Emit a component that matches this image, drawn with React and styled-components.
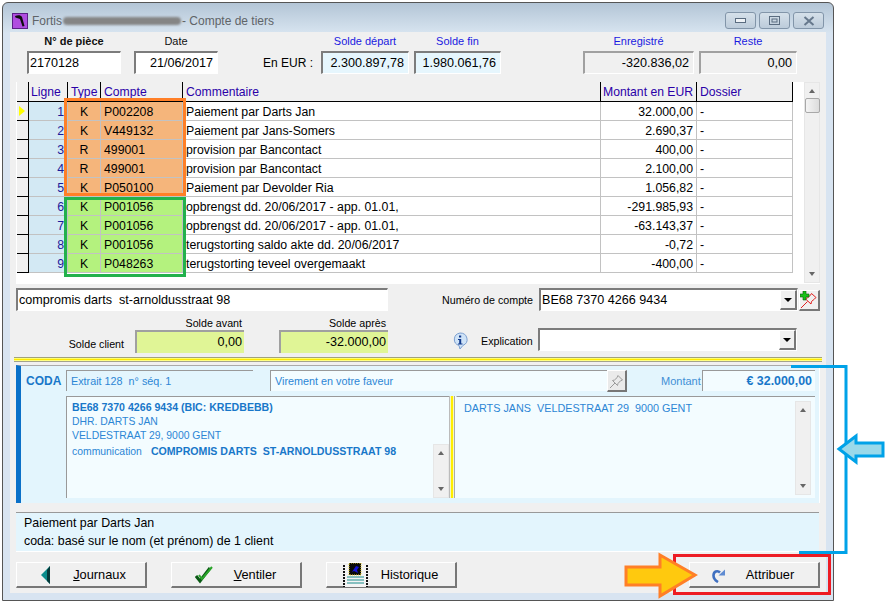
import React from "react";
import styled, { createGlobalStyle } from "styled-components";

const GlobalStyle = createGlobalStyle`
  html, body { margin: 0; padding: 0; background: #fff; }
  body { font-family: "Liberation Sans", Arial, sans-serif; color: #000; }
  * { box-sizing: border-box; }
`;

const Page = styled.div`
  position: relative;
  width: 886px;
  height: 603px;
  padding: 2px 0 0 2px;
  overflow: hidden;
`;

const Window = styled.div`
  width: 832px;
  height: 599px;
  border: 1px solid #555;
  border-radius: 6px 6px 0 0;
  background: linear-gradient(#b3c5d6 0, #d6e3ef 29px, #d8e4f1 30px);
  padding: 0 7px 7px;
  display: flex;
  flex-direction: column;
`;

const TitleBar = styled.div`
  height: 29px;
  flex: none;
  display: flex;
  align-items: center;
  font-size: 12px;
  color: #5f6468;
  padding: 6px 2px 0 2px;
`;

const TitleText = styled.span`
  margin-left: 4px;
`;

const Blurred = styled.span`
  width: 118px;
  height: 8px;
  margin: 0 1px 0 1px;
  background: #858585;
  border-radius: 4px;
  filter: blur(0.8px);
`;

const WinButtons = styled.div`
  margin-left: auto;
  display: flex;
  gap: 3px;
`;

const WinButton = styled.div`
  width: 31px;
  height: 17px;
  border: 1px solid #8295a9;
  border-radius: 3px;
  background: linear-gradient(#d5e0ea, #c9d6e2 50%, #bccbda);
  display: flex;
  align-items: center;
  justify-content: center;
`;

const Content = styled.div`
  flex: 1;
  background: #f0f0f0;
  width: 816px;
  display: flex;
  flex-direction: column;
`;

const HeaderRow = styled.div`
  display: flex;
  align-items: flex-end;
  padding-left: 17px;
  height: 42px;
`;

const FieldCol = styled.div`
  width: ${(p) => p.$w}px;
  margin-left: ${(p) => p.$ml || 0}px;
  display: flex;
  flex-direction: column;
`;

const TopLabel = styled.div`
  height: 19px;
  padding-top: 3px;
  font-size: 11px;
  text-align: center;
  font-weight: ${(p) => (p.$bold ? 700 : 400)};
  color: ${(p) => (p.$blue ? "#1a1ae0" : "#111")};
`;

const Sunken = styled.div`
  height: 23px;
  border-style: solid;
  border-width: 2px 1px 1px 2px;
  border-color: ${(p) => (p.$soft ? "#a0a0a0" : "#7c7c7c")} #fff #fff ${(p) => (p.$soft ? "#a0a0a0" : "#7c7c7c")};
  background: ${(p) => p.$bg || "#fff"};
  font-size: 12.6px;
  line-height: 21px;
  padding: 0 ${(p) => (p.$right ? 4 : 1)}px 0 1px;
  text-align: ${(p) => (p.$right ? "right" : "left")};
  white-space: nowrap;
`;

const Caption = styled.div`
  font-size: 12px;
  width: ${(p) => p.$w}px;
  height: 23px;
  line-height: 24px;
  text-align: right;
  padding-right: 8px;
`;

const TableArea = styled.div`
  margin: 8px 0 0 6px;
  width: 804px;
  height: 202px;
  background: #fff;
  padding-left: 1px;
  display: flex;
  justify-content: space-between;
`;

const Grid = styled.div`
  width: 776px;
  display: flex;
  flex-direction: column;
`;

const columns = "12px 39px 33px 82px 418px 96px 96px";

const HeadRow = styled.div`
  display: grid;
  grid-template-columns: ${columns};
  height: 20px;
  background: #f0f0f0;
  border-bottom: 1px solid #000;
`;

const HeadCell = styled.div`
  font-size: 12.2px;
  line-height: 21px;
  color: #2a00a8;
  padding-left: ${(p) => p.$pl || 3}px;
  border-right: 1px solid #000;
  white-space: nowrap;
  overflow: hidden;
`;

const Row = styled.div`
  display: grid;
  grid-template-columns: ${columns};
  height: 19px;
`;

const Marker = styled.div`
  background: #f0f0f0;
  border-bottom: 1px solid #000;
  border-right: 1px solid #000;
  display: flex;
  align-items: center;
  padding-left: 2px;
`;

const Triangle = styled.span`
  width: 0;
  height: 0;
  border-left: 6px solid #ffff00;
  border-top: 5px solid transparent;
  border-bottom: 5px solid transparent;
`;

const tones = { orange: "#f5b57b", green: "#b4f27e", head: "#d3e9f4" };

const cellPadding = { right: "0 3px 0 0", center: "0" };

const Cell = styled.div`
  font-size: 12.3px;
  line-height: 20px;
  padding: ${(p) => cellPadding[p.$align] || "0 2px 0 3px"};
  text-align: ${(p) => p.$align || "left"};
  color: ${(p) => (p.$tone === "head" ? "#1a1a9a" : "#000")};
  background: ${(p) => tones[p.$tone] || "#fff"};
  border-right: 1px solid #c2c2c2;
  border-bottom: 1px solid #c2c2c2;
  white-space: nowrap;
  overflow: hidden;
`;

const ScrollBar = styled.div`
  width: ${(p) => p.$w || 16}px;
  height: ${(p) => p.$h}px;
  flex: none;
  background: #f0f0f0;
  border: 1px solid #e6e6e6;
  display: flex;
  flex-direction: column;
  align-items: center;
  justify-content: space-between;
  padding: 6px 0;
`;

const ScrollArrow = styled.span`
  width: 0;
  height: 0;
  border-left: 3.5px solid transparent;
  border-right: 3.5px solid transparent;
  ${(p) => (p.$down ? "border-top: 4px solid #666;" : "border-bottom: 4px solid #666;")}
`;

const ScrollThumb = styled.div`
  width: 15px;
  height: 15px;
  margin-top: 5px;
  margin-bottom: auto;
  border: 1px solid #a8a8a8;
  border-radius: 2px;
  background: linear-gradient(90deg, #f4f4f4, #dcdcdc);
`;

const EntryRow = styled.div`
  display: flex;
  align-items: flex-end;
  margin: 4px 0 0 6px;
  height: 23px;
`;

const SmallLabel = styled.div`
  font-size: 10.7px;
  width: ${(p) => p.$w}px;
  text-align: ${(p) => p.$align || "right"};
  padding-bottom: ${(p) => p.$pb || 0}px;
  white-space: nowrap;
`;

const Combo = styled(Sunken)`
  position: relative;
  width: ${(p) => p.$w}px;
  margin-left: ${(p) => p.$ml || 0}px;
  flex: none;
`;

const Drop = styled.div`
  position: absolute;
  right: 0;
  top: 0;
  width: 17px;
  height: 20px;
  background: #f0f0f0;
  border-style: solid;
  border-width: 1px 2px 2px 1px;
  border-color: #fff #777 #777 #fff;
  display: flex;
  align-items: center;
  justify-content: center;
`;

const DropArrow = styled.span`
  width: 0;
  height: 0;
  border-left: 4px solid transparent;
  border-right: 4px solid transparent;
  border-top: 4px solid #000;
`;

const IconButton = styled.div`
  width: ${(p) => p.$w}px;
  height: ${(p) => p.$h}px;
  flex: none;
  margin-left: ${(p) => p.$ml || 0}px;
  background: #f0f0f0;
  border-style: solid;
  border-width: 1px 2px 2px 1px;
  border-color: #fff #777 #777 #fff;
  display: flex;
  align-items: center;
  justify-content: center;
`;

const BalanceRow = styled.div`
  display: flex;
  align-items: flex-end;
  margin: 6px 0 0 6px;
  height: 36px;
`;

const BalanceCol = styled.div`
  width: 109px;
  margin-left: ${(p) => p.$ml || 0}px;
  display: flex;
  flex-direction: column;
`;

const BalanceLabel = styled.div`
  font-size: 10.7px;
  height: 13px;
  line-height: 13px;
  text-align: right;
  padding-right: 2px;
`;

const BalanceValue = styled(Sunken)`
  border-right: none;
  border-bottom: none;
  padding-right: 2px;
`;

const InfoSlot = styled.div`
  width: 16px;
  height: 18px;
  margin: 0 13px 3px 64px;
`;

const ExplCombo = styled(Combo)`
  margin-bottom: 2px;
`;

const DoubleLine = styled.div`
  margin: 4px 0 0 4px;
  width: 808px;
  height: 5px;
  flex: none;
  background: linear-gradient(#a3a37a 0 1px, #ffff70 1px 2px, #ffe800 2px 3px, #ffff80 3px 4px, #a3a38c 4px 5px);
`;

const CodaPanel = styled.div`
  margin: 3px 0 0 6px;
  width: 804px;
  height: 138px;
  flex: none;
  background: #e3f5fd;
  border-top: 1px solid #aaa;
  border-left: 5px solid #0a70c8;
  border-right: 1px solid #fff;
  display: flex;
  flex-direction: column;
  padding-top: 4px;
`;

const CodaTop = styled.div`
  display: flex;
  align-items: center;
  height: 21px;
`;

const CodaTitle = styled.div`
  width: 45px;
  padding-left: 5px;
  font-size: 12px;
  font-weight: 700;
  color: #1877c9;
`;

const CodaField = styled.div`
  position: relative;
  width: ${(p) => p.$w}px;
  margin-left: ${(p) => p.$ml || 0}px;
  height: 21px;
  padding: 0 ${(p) => (p.$right ? 3 : 4)}px;
  border-top: 1px solid #999;
  border-left: 1px solid #999;
  background: ${(p) => p.$bg || "#e3f5fd"};
  color: ${(p) => (p.$right ? "#1877c9" : "#2c86d5")};
  font-size: ${(p) => (p.$right ? 12.4 : 10.8)}px;
  font-weight: ${(p) => (p.$right ? 700 : 400)};
  line-height: 20px;
  text-align: ${(p) => (p.$right ? "right" : "left")};
`;

const PinButton = styled(IconButton)`
  position: absolute;
  right: 0;
  top: -1px;
  background: #eaeaea;
`;

const CodaLabel = styled.div`
  margin-left: 34px;
  width: 41px;
  font-size: 11px;
  color: #3f8fd6;
`;

const CodaBody = styled.div`
  display: flex;
  margin: 5px 0 0 45px;
  height: 102px;
`;

const CodaBox = styled.div`
  position: relative;
  flex: none;
  width: ${(p) => p.$w}px;
  background: #f3fcff;
  border-top: 1px solid #999;
  border-left: 1px solid ${(p) => (p.$plain ? "#999" : "transparent")};
  padding: ${(p) => (p.$plain ? "3px 0 0 5px" : "4px 0 0 7px")};
  font-size: ${(p) => (p.$plain ? 10.4 : 10.8)}px;
  line-height: 14.7px;
  color: #2c86d5;
`;

const CodaLine = styled.div`
  display: flex;
  align-items: baseline;
  gap: 9px;
  white-space: pre;
`;

const Strong = styled.b`
  color: #1877c9;
  font-size: 10.6px;
`;

const BoxScroll = styled.div`
  position: absolute;
  right: ${(p) => p.$r}px;
  top: ${(p) => p.$t}px;
`;

const Splitter = styled.div`
  width: 7px;
  flex: none;
  background: linear-gradient(90deg, #bbb 0 1px, #f7f7c0 1px 2px, #ffee00 2px 4px, #f7f7c0 4px 5px, #aaa 5px 6px, #f3fcff 6px);
`;

const StatusBox = styled.div`
  margin: 9px 0 0 6px;
  width: 803px;
  height: 40px;
  flex: none;
  background: #e3f5fd;
  border-top: 1px solid #999;
  border-bottom: 1px solid #fff;
  font-size: 12.4px;
  line-height: 18px;
  padding: 1px 0 0 8px;
`;

const ButtonBar = styled.div`
  display: flex;
  margin: 10px 0 0 6px;
  gap: 24px;
`;

const ActionButton = styled.div`
  position: relative;
  width: 131px;
  height: 26px;
  margin-left: ${(p) => p.$ml || 0}px;
  background: #f0f0f0;
  border-style: solid;
  border-width: 1px 2px 2px 1px;
  border-color: #fff #777 #777 #fff;
  font-size: 12.8px;
  line-height: 24px;
  text-align: center;
  padding-left: ${(p) => p.$pl || 0}px;
`;

const ButtonIcon = styled.span`
  position: absolute;
  left: ${(p) => p.$x}px;
  top: ${(p) => p.$y}px;
  display: block;
  line-height: 0;
`;

const Frame = styled.div`
  position: absolute;
  left: ${(p) => p.$x}px;
  top: ${(p) => p.$y}px;
  width: ${(p) => p.$w}px;
  height: ${(p) => p.$h}px;
  border: 3px solid ${(p) => p.$color};
  pointer-events: none;
`;

const Annotations = styled.svg`
  position: absolute;
  left: 0;
  top: 0;
  pointer-events: none;
`;

const rows = [
  ["1", "K", "P002208", "Paiement par Darts Jan", "32.000,00", "orange"],
  ["2", "K", "V449132", "Paiement par Jans-Somers", "2.690,37", "orange"],
  ["3", "R", "499001", "provision par Bancontact", "400,00", "orange"],
  ["4", "R", "499001", "provision par Bancontact", "2.100,00", "orange"],
  ["5", "K", "P050100", "Paiement par Devolder Ria", "1.056,82", "orange"],
  ["6", "K", "P001056", "opbrengst dd. 20/06/2017 - app. 01.01,", "-291.985,93", "green"],
  ["7", "K", "P001056", "opbrengst dd. 20/06/2017 - app. 01.01,", "-63.143,37", "green"],
  ["8", "K", "P001056", "terugstorting saldo akte dd. 20/06/2017", "-0,72", "green"],
  ["9", "K", "P048263", "terugstorting teveel overgemaakt", "-400,00", "green"],
];

const AppIcon = () => (
  <svg width="16" height="16" viewBox="0 0 16 16">
    <rect width="16" height="16" fill="#b04de0" />
    <rect x="0.5" y="0.5" width="15" height="15" fill="none" stroke="#5a1f86" />
    <path d="M3 3c3-1.500 6-1 7 1l2.500 9-2 .5L8 6 3.500 4.500z" fill="#0d0d0d" />
  </svg>
);

const PinIcon = ({ color, size = 16 }) => (
  <svg width={size} height={size} viewBox="0 0 16 16" fill="none" stroke={color} strokeWidth="1">
    <path d="M1 15l5-5" />
    <path d="M9 2.500l4.500 4.500-2 .8-2.500 2.700-.5 2-5-5 2-.5L8.200 4.500z" />
  </svg>
);

const AddPinIcon = () => (
  <svg width="18" height="18" viewBox="0 0 18 18" fill="none">
    <path d="M1 17l6.500-6.500" stroke="#e02020" />
    <path d="M11.500 2.500l4.500 4-1.500 1.500-3 2.500-.5 2.500-6-5.500 2.500-.5 3-3z" stroke="#e02020" />
    <path d="M3 0h3v3h3v3H6v3H3V6H0V3h3z" fill="#18c018" stroke="#0a5a0a" strokeWidth="0.600" />
  </svg>
);

const InfoIcon = () => (
  <svg width="16" height="18" viewBox="0 0 16 18">
    <path d="M8 1a7 6.500 0 0 1 3 12.400L8 17l-1-3.500A7 6.500 0 0 1 8 1z" fill="#cfe3f7" stroke="#7c9fd0" />
    <rect x="7" y="3.500" width="2.200" height="2" fill="#123a8c" />
    <path d="M6 7h3.200v4.500H10.500v1H6v-1h1.200V8H6z" fill="#123a8c" />
  </svg>
);

const BackIcon = () => (
  <svg width="10" height="18" viewBox="0 0 10 18">
    <path d="M9 0v18L0 9z" fill="#0a8c8c" />
    <path d="M9 0v18L6 15V4z" fill="#063a3a" />
  </svg>
);

const CheckIcon = () => (
  <svg width="18" height="18" viewBox="0 0 18 18" fill="none">
    <path d="M1 10l4 5L15 2" stroke="#0a5a14" strokeWidth="3" />
    <path d="M4 9l3 4L17 1" stroke="#2aa52a" strokeWidth="2" />
  </svg>
);

const BookIcon = () => (
  <svg width="25" height="24" viewBox="0 0 25 24">
    <rect x="1" y="2" width="23" height="22" fill="#f4f4f4" />
    <path d="M1 2v22M24 2v22" stroke="#111" strokeWidth="2" strokeDasharray="2 1" />
    <path d="M4 14h17M4 17h17M4 20h17" stroke="#1a8c8c" strokeWidth="1.200" />
    <rect x="6" y="0" width="12" height="12" fill="#0a0a0a" stroke="#e8d22c" strokeDasharray="1 1" />
    <path d="M9 9l4-6 3 1-2 3 1 3-4-2z" fill="#1414d8" />
  </svg>
);

const RefreshIcon = () => (
  <svg width="13" height="14" viewBox="0 0 13 14" fill="none">
    <path d="M8 3.500C5.500 1 1.500 2.500 1.500 6.500c0 3 2 5 4.500 6.500" stroke="#3f6fc0" strokeWidth="2.600" />
    <path d="M6.500 6.500H13V.5z" fill="#5f8bd2" />
  </svg>
);

const App = () => (
  <Page>
    <GlobalStyle />
    <Window>
      <TitleBar>
        <AppIcon />
        <TitleText>Fortis</TitleText>
        <Blurred />
        <span>- Compte de tiers</span>
        <WinButtons>
          <WinButton>
            <svg width="11" height="6"><rect x="0.5" y="0.500" width="10" height="4" fill="#eef2f6" stroke="#5a6c80" /></svg>
          </WinButton>
          <WinButton>
            <svg width="11" height="9"><rect x="0.5" y="0.500" width="10" height="8" fill="none" stroke="#5a6c80" /><rect x="3" y="3" width="5" height="3" fill="none" stroke="#5a6c80" /></svg>
          </WinButton>
          <WinButton>
            <svg width="12" height="10"><path d="M1.500 1l9 8M10.500 1l-9 8" stroke="#66788c" strokeWidth="2" /></svg>
          </WinButton>
        </WinButtons>
      </TitleBar>
      <Content>
        <HeaderRow>
          <FieldCol $w={94}>
            <TopLabel $bold>N° de pièce</TopLabel>
            <Sunken>2170128</Sunken>
          </FieldCol>
          <FieldCol $w={84} $ml={13}>
            <TopLabel>Date</TopLabel>
            <Sunken $right>21/06/2017</Sunken>
          </FieldCol>
          <Caption $w={103}>En EUR :</Caption>
          <FieldCol $w={88}>
            <TopLabel $blue>Solde départ</TopLabel>
            <Sunken $right $bg="#e6f6fd">2.300.897,78</Sunken>
          </FieldCol>
          <FieldCol $w={87} $ml={5}>
            <TopLabel $blue>Solde fin</TopLabel>
            <Sunken $right $bg="#e6f6fd">1.980.061,76</Sunken>
          </FieldCol>
          <FieldCol $w={111} $ml={82}>
            <TopLabel $blue>Enregistré</TopLabel>
            <Sunken $right $soft $bg="#f0f0f0">-320.836,02</Sunken>
          </FieldCol>
          <FieldCol $w={98} $ml={5}>
            <TopLabel $blue>Reste</TopLabel>
            <Sunken $right $soft $bg="#f0f0f0">0,00</Sunken>
          </FieldCol>
        </HeaderRow>

        <TableArea>
          <Grid>
            <HeadRow>
              <HeadCell />
              <HeadCell $pl={2}>Ligne</HeadCell>
              <HeadCell>Type</HeadCell>
              <HeadCell>Compte</HeadCell>
              <HeadCell>Commentaire</HeadCell>
              <HeadCell $pl={2}>Montant en EUR</HeadCell>
              <HeadCell>Dossier</HeadCell>
            </HeadRow>
            {rows.map(([line, type, account, comment, amount, tone]) => (
              <Row key={line}>
                <Marker>{line === "1" && <Triangle />}</Marker>
                <Cell $tone="head" $align="right">{line}</Cell>
                <Cell $tone={tone} $align="center">{type}</Cell>
                <Cell $tone={tone}>{account}</Cell>
                <Cell>{comment}</Cell>
                <Cell $align="right">{amount}</Cell>
                <Cell>-</Cell>
              </Row>
            ))}
          </Grid>
          <ScrollBar $h={201}>
            <ScrollArrow />
            <ScrollThumb />
            <ScrollArrow $down />
          </ScrollBar>
        </TableArea>

        <EntryRow>
          <Combo $w={372}>compromis darts&nbsp; st-arnoldusstraat 98</Combo>
          <SmallLabel $w={145} $pb={5}>Numéro de compte</SmallLabel>
          <Combo $w={259} $ml={6}>
            BE68 7370 4266 9434
            <Drop><DropArrow /></Drop>
          </Combo>
          <IconButton $w={21} $h={21} $ml={1}>
            <AddPinIcon />
          </IconButton>
        </EntryRow>

        <BalanceRow>
          <SmallLabel $w={108} $pb={3}>Solde client</SmallLabel>
          <BalanceCol $ml={11}>
            <BalanceLabel>Solde avant</BalanceLabel>
            <BalanceValue $right $soft $bg="#e0f596">0,00</BalanceValue>
          </BalanceCol>
          <BalanceCol $ml={35}>
            <BalanceLabel>Solde après</BalanceLabel>
            <BalanceValue $right $soft $bg="#e0f596">-32.000,00</BalanceValue>
          </BalanceCol>
          <InfoSlot><InfoIcon /></InfoSlot>
          <SmallLabel $w={52} $pb={6} $align="left">Explication</SmallLabel>
          <ExplCombo $w={259} $ml={5}>
            <Drop><DropArrow /></Drop>
          </ExplCombo>
        </BalanceRow>

        <DoubleLine />

        <CodaPanel>
          <CodaTop>
            <CodaTitle>CODA</CodaTitle>
            <CodaField $w={187}>Extrait 128&nbsp; n° séq. 1</CodaField>
            <CodaField $w={357} $ml={17} $bg="#f3fcff">
              Virement en votre faveur
              <PinButton $w={20} $h={22}><PinIcon color="#9a9a9a" /></PinButton>
            </CodaField>
            <CodaLabel>Montant</CodaLabel>
            <CodaField $w={113} $right $bg="#f3fcff">€ 32.000,00</CodaField>
          </CodaTop>
          <CodaBody>
            <CodaBox $plain $w={383}>
              <CodaLine><Strong>BE68 7370 4266 9434 (BIC: KREDBEBB)</Strong></CodaLine>
              <CodaLine>DHR. DARTS JAN</CodaLine>
              <CodaLine>VELDESTRAAT 29, 9000 GENT</CodaLine>
              <CodaLine>
                <span>communication</span>
                <Strong>COMPROMIS DARTS  ST-ARNOLDUSSTRAAT 98</Strong>
              </CodaLine>
              <BoxScroll $r={0} $t={47}>
                <ScrollBar $h={54}>
                  <ScrollArrow />
                  <ScrollArrow $down />
                </ScrollBar>
              </BoxScroll>
            </CodaBox>
            <Splitter />
            <CodaBox $w={359}>
              <CodaLine>DARTS JANS  VELDESTRAAT 29  9000 GENT</CodaLine>
              <BoxScroll $r={4} $t={4}>
                <ScrollBar $h={94}>
                  <ScrollArrow />
                  <ScrollArrow $down />
                </ScrollBar>
              </BoxScroll>
            </CodaBox>
          </CodaBody>
        </CodaPanel>

        <StatusBox>
          Paiement par Darts Jan
          <br />
          coda: basé sur le nom (et prénom) de 1 client
        </StatusBox>

        <ButtonBar>
          <ActionButton $pl={37}>
            <ButtonIcon $x={24} $y={3}><BackIcon /></ButtonIcon>
            <u>J</u>ournaux
          </ActionButton>
          <ActionButton $pl={38}>
            <ButtonIcon $x={23} $y={3}><CheckIcon /></ButtonIcon>
            <u>V</u>entiler
          </ActionButton>
          <ActionButton $pl={37}>
            <ButtonIcon $x={16} $y={0}><BookIcon /></ButtonIcon>
            Historique
          </ActionButton>
          <ActionButton $ml={208} $pl={32}>
            <ButtonIcon $x={22} $y={6}><RefreshIcon /></ButtonIcon>
            Attribuer
          </ActionButton>
        </ButtonBar>
      </Content>
    </Window>

    <Frame $x={64} $y={98} $w={122} $h={98} $color="#ff7f27" />
    <Frame $x={64} $y={197} $w={122} $h={80} $color="#22b14c" />
    <Frame $x={673} $y={554} $w={158} $h={41} $color="#ed1c24" />

    <Annotations width="886" height="603" viewBox="0 0 886 603">
      <path d="M791 366.500H846V552.500H799" fill="none" stroke="#00a2e8" strokeWidth="3" />
      <path d="M839 449L856 436V443H883V456H856V462z" fill="#99d9ea" stroke="#00a2e8" strokeWidth="3" />
      <path d="M626 567H660V555L695 575L660 596V585H626z" fill="#ffc90e" stroke="#ff7f27" strokeWidth="3" />
    </Annotations>
  </Page>
);

export default App;
